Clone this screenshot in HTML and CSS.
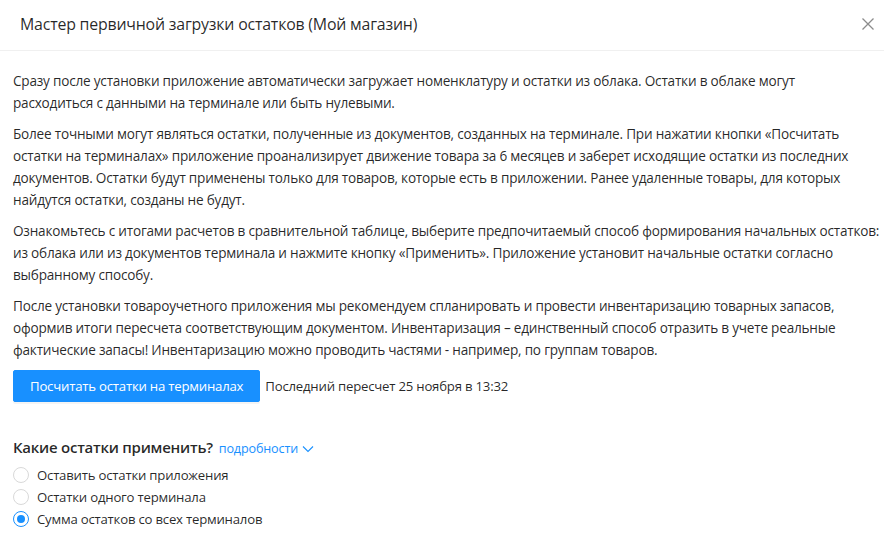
FILE: index.html
```html
<!DOCTYPE html>
<html lang="ru">
<head>
<meta charset="utf-8">
<link rel="stylesheet" href="styles.css">
</head>
<body>
<div class="modal">
  <div class="modal-header">
    <div class="modal-title">Мастер первичной загрузки остатков (Мой магазин)</div>
    <button class="modal-close" aria-label="Закрыть">
      <svg width="14" height="14" viewBox="0 0 14 14"><path d="M1.5 1.5 L12.5 12.5 M12.5 1.5 L1.5 12.5" stroke="#8c8c8c" stroke-width="1.3" fill="none"/></svg>
    </button>
  </div>
  <div class="modal-body">
    <p class="para">Сразу после установки приложение автоматически загружает номенклатуру и остатки из облака. Остатки в облаке могут<br>расходиться с данными на терминале или быть нулевыми.</p>
    <p class="para">Более точными могут являться остатки, полученные из документов, созданных на терминале. При нажатии кнопки «Посчитать<br>остатки на терминалах» приложение проанализирует движение товара за 6 месяцев и заберет исходящие остатки из последних<br>документов. Остатки будут применены только для товаров, которые есть в приложении. Ранее удаленные товары, для которых<br>найдутся остатки, созданы не будут.</p>
    <p class="para">Ознакомьтесь с итогами расчетов в сравнительной таблице, выберите предпочитаемый способ формирования начальных остатков:<br>из облака или из документов терминала и нажмите кнопку «Применить». Приложение установит начальные остатки согласно<br>выбранному способу.</p>
    <p class="para">После установки товароучетного приложения мы рекомендуем спланировать и провести инвентаризацию товарных запасов,<br>оформив итоги пересчета соответствующим документом. Инвентаризация – единственный способ отразить в учете реальные<br>фактические запасы! Инвентаризацию можно проводить частями - например, по группам товаров.</p>
    <div class="recalc">
      <button class="btn-primary">Посчитать остатки на терминалах</button>
      <span class="recalc-info">Последний пересчет 25 ноября в 13:32</span>
    </div>
    <div class="choose">
      <h3 class="choose-title">Какие остатки применить?</h3>
      <a class="more" href="#">подробности
        <svg width="12" height="12" viewBox="0 0 12 12"><path d="M1 3.5 L6 8.5 L11 3.5" stroke="#1890ff" stroke-width="1.1" fill="none"/></svg>
      </a>
    </div>
    <div class="radios">
      <label class="radio"><span class="radio-dot"></span><span>Оставить остатки приложения</span></label>
      <label class="radio"><span class="radio-dot"></span><span>Остатки одного терминала</span></label>
      <label class="radio checked"><span class="radio-dot"></span><span>Сумма остатков со всех терминалов</span></label>
    </div>
  </div>
</div>
</body>
</html>
```

FILE: styles.css
```css
* { box-sizing: border-box; }
html, body {
  margin: 0;
  padding: 0;
  background: #fff;
}
body {
  font-family: "Open Sans", "Noto Sans", sans-serif;
  font-size: 13.6px;
  letter-spacing: -0.22px;
  color: rgba(0, 0, 0, 0.85);
  width: 884px;
  height: 540px;
  overflow: hidden;
}
.modal {
  width: 884px;
}
.modal-header {
  height: 51px;
  border-bottom: 1px solid #f0f0f0;
  display: flex;
  align-items: center;
  justify-content: space-between;
  padding: 0 5px 2px 20px;
}
.modal-title {
  font-size: 15.9px;
  font-weight: 500;
  letter-spacing: -0.2px;
  line-height: 22px;
  color: rgba(0, 0, 0, 0.85);
}
.modal-close {
  border: 0;
  background: none;
  padding: 0;
  width: 22px;
  height: 22px;
  display: flex;
  align-items: center;
  justify-content: center;
  cursor: pointer;
}
.modal-body {
  padding: 19px 0 0 13px;
}
.para {
  margin: 0 0 9px;
  line-height: 22px;
  white-space: nowrap;
}
.recalc {
  display: flex;
  align-items: center;
  gap: 5px;
}
.btn-primary {
  height: 32px;
  padding: 0 16px;
  border: 1px solid #1890ff;
  background: #1890ff;
  color: #fff;
  border-radius: 2px;
  font-family: inherit;
  font-size: 13.2px;
  letter-spacing: -0.22px;
  box-shadow: 0 2px 0 rgba(0, 0, 0, 0.045);
}
.recalc-info {
  font-size: 13.2px;
}
.choose {
  display: flex;
  align-items: baseline;
  gap: 6px;
  margin-top: 33px;
}
.choose-title {
  margin: 0;
  font-size: 15px;
  font-weight: 600;
  letter-spacing: -0.25px;
  line-height: 24px;
}
.more {
  color: #1890ff;
  text-decoration: none;
  font-size: 12.6px;
  letter-spacing: -0.15px;
  display: inline-flex;
  align-items: center;
  gap: 4px;
}
.radios {
  margin-top: 5px;
  display: flex;
  flex-direction: column;
}
.radio {
  display: flex;
  align-items: center;
  gap: 8px;
  line-height: 22px;
  font-size: 13.2px;
}
.radio-dot {
  width: 16px;
  height: 16px;
  border: 1px solid #d9d9d9;
  border-radius: 50%;
  position: relative;
  flex: none;
}
.radio.checked .radio-dot {
  border-color: #1890ff;
}
.radio.checked .radio-dot::after {
  content: "";
  position: absolute;
  left: 3px;
  top: 3px;
  width: 8px;
  height: 8px;
  border-radius: 50%;
  background: #1890ff;
}
```
